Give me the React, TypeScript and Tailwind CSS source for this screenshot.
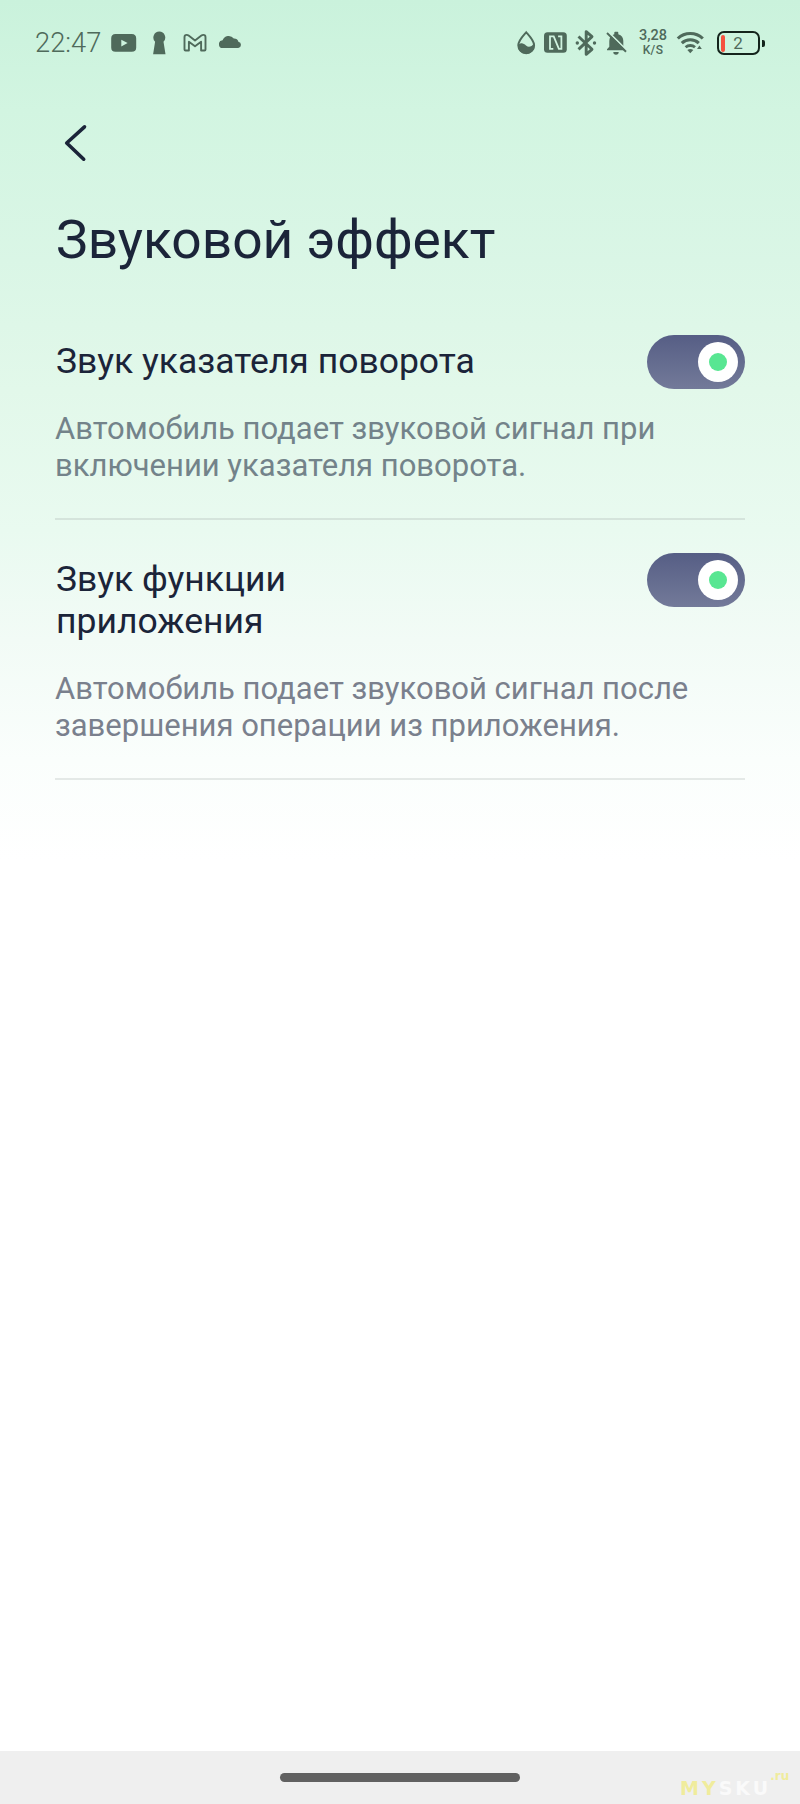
import React, { useState } from "react";

function LeftIcons() {
  return (
    <>
      <svg className="ml-[10px] shrink-0" width="26" height="28" viewBox="111 29 26 28" fill="#4f6a5b">
        <path
          fillRule="evenodd"
          d="M115.5 34h16.2q4.5 0 4.500 4.500v9q0 4.300-4.500 4.300h-16.200q-4.300 0-4.300-4.300v-9q0-4.500 4.300-4.500zM121.300 39.700v6.800l6.300-3.400z"
        />
      </svg>
      <svg className="ml-[16px] shrink-0" width="13" height="28" viewBox="153 29 13 28" fill="#4f6a5b">
        <path d="M159.300 31.600a6 6 0 0 1 4.200 10.200l2 12.400h-12.400l2-12.400a6 6 0 0 1 4.200-10.200z" />
      </svg>
      <svg className="ml-[17px] shrink-0" width="24" height="28" viewBox="183 29 24 28" fill="none" stroke="#4f6a5b" strokeWidth="1.900" strokeLinejoin="round">
        <path d="M184.500 49.500V37.200q0-2.300 2.200-2.300 1 0 1.900.7l6.400 4.900 6.400-4.900q.9-.7 1.900-.7 2.200 0 2.200 2.300v12.300q0 1-1 1h-3.400v-8.800l-6.100 4.600-6.100-4.600v8.800h-3.400q-1 0-1-1z" />
      </svg>
      <svg className="ml-[12px] shrink-0" width="23" height="28" viewBox="219 29 23 28" fill="#4f6a5b">
        <path d="M223 48.100a3.900 3.900 0 0 1-.4-7.800 6.400 6.400 0 0 1 11.200-1.800 4.600 4.600 0 0 1 4.600 3.300 3.200 3.200 0 0 1-.2 6.300z" />
      </svg>
    </>
  );
}

function RightIcons() {
  return (
    <>
      <svg className="shrink-0" width="19" height="28" viewBox="518 29 19 28">
        <path d="M527.200 32.300c-3 3.400-7.900 8.300-7.900 13a7.900 7.900 0 0 0 15.800 0c0-4.700-4.900-9.600-7.900-13z" fill="none" stroke="#4f6a5b" strokeWidth="2" />
        <path d="M519 45.300c3-3.300 5.500-2 8 .2 2.800 2.300 5.300 1.300 8.300-2.300 1.500 6-2.500 10.600-8.100 10.600-4.800 0-8.400-3.500-8.200-8.500z" fill="#4f6a5b" />
      </svg>
      <svg className="ml-[8px] shrink-0" width="23" height="28" viewBox="545 29 23 28">
        <rect x="545" y="32.300" width="22.800" height="20.400" rx="3.500" fill="#4f6a5b" />
        <path d="M554.300 48.800H551V36.300h3.700l5.200 12.500h2.500V36.300h-3.300" fill="none" stroke="#d0f3e0" strokeWidth="1.800" />
      </svg>
      <svg className="ml-[8px] shrink-0" width="22" height="28" viewBox="576 29 22 28">
        <path d="M579.500 36.500l13.500 12.800-5.800 5V31.600l5.800 5-13.500 12.800" fill="none" stroke="#4f6a5b" strokeWidth="2.900" strokeLinejoin="round" />
        <circle cx="578.300" cy="43" r="1.700" fill="#4f6a5b" />
        <circle cx="595.500" cy="43" r="1.700" fill="#4f6a5b" />
      </svg>
      <svg className="ml-[9px] shrink-0" width="22" height="28" viewBox="607 29 22 28">
        <path d="M608 50.300v-1l2.300-2.500V41a7 7 0 0 1 5-6.800v-1.500q0-.9.900-.9h2.200q.9 0 .9.900v1.500a7 7 0 0 1 5 6.800v5.800l2.300 2.500v1z" fill="#4f6a5b" />
        <path d="M614.300 52h5.400a2.700 2.700 0 0 1-5.400 0z" fill="#4f6a5b" />
        <path d="M609.200 31.900l19.300 19" stroke="#d0f3e0" strokeWidth="1.800" />
        <path d="M608 33l19 18.800" stroke="#4f6a5b" strokeWidth="1.900" />
      </svg>
      <div className="ml-[9px] flex w-[32px] shrink-0 flex-col items-center font-medium">
        <span className="text-[14.500px] leading-[14px]">3,28</span>
        <span className="text-[12px] leading-[14px] tracking-[0.400px]">K/S</span>
      </div>
      <svg className="ml-[7px] shrink-0" width="29" height="28" viewBox="677 29 29 28" fill="none" stroke="#4f6a5b">
        <path d="M678.800 38.500a18 18 0 0 1 25 0" strokeWidth="3.100" />
        <path d="M682.800 43.100a12.500 12.500 0 0 1 17 0" strokeWidth="3.100" />
        <path d="M686.600 47.300a7 7 0 0 1 9.400 0" strokeWidth="2.800" />
        <path d="M688.300 50q3-2 6 0l-3 3.300z" fill="#4f6a5b" stroke="none" />
        <path d="M698 49l2.400-3.500 2.400 3.500z" fill="#4f6a5b" stroke="none" />
      </svg>
      <div className="ml-[12px] flex h-[24px] w-[43px] shrink-0 items-center rounded-[7px] border-2 border-[#14241c] pl-[2px]">
        <div className="h-[17px] w-[4px] rounded-[2px] bg-[#f5513f]" />
        <span className="flex-1 pr-[7px] text-center text-[17px] leading-[20px]">2</span>
      </div>
      <div className="ml-[2px] h-[7px] w-[3px] shrink-0 rounded-r-[2px] bg-[#14241c]" />
    </>
  );
}

function Toggle({ label }: { label: string }) {
  const [on, setOn] = useState(true);
  return (
    <button
      role="switch"
      aria-checked={on}
      aria-label={label}
      onClick={() => setOn(!on)}
      className={`-mb-[7px] flex h-[54px] w-[98px] shrink-0 items-center rounded-full bg-linear-to-b from-[#565e85] to-[#737a99] px-[7px] ${on ? "justify-end" : "justify-start"}`}
    >
      <span className="flex size-[40px] items-center justify-center rounded-full bg-white">
        <span className="size-[18px] rounded-full bg-[#58e692]" />
      </span>
    </button>
  );
}

function Setting({ title, lines, descriptionColor, border }: { title: string; lines: string[]; descriptionColor: string; border: string }) {
  return (
    <section className={`border-b-2 pb-[34px] ${border}`}>
      <div className="flex items-start justify-between">
        <h2 className="pt-[5px] pl-px text-[35.500px] leading-[42px] whitespace-pre-line text-[#1b2439]">{title}</h2>
        <Toggle label={title} />
      </div>
      <p className={`mt-[29px] text-[31px] leading-[36.500px] whitespace-nowrap ${descriptionColor}`}>
        {lines.map((line) => (
          <span key={line} className="block">
            {line}
          </span>
        ))}
      </p>
    </section>
  );
}

export default function App() {
  return (
    <div className="relative flex h-[1804px] w-[800px] flex-col overflow-hidden bg-white bg-[linear-gradient(to_bottom,#caf2dc_0px,#d2f5e1_110px,#daf6e6_260px,#e2f8ea_390px,#e9faf0_530px,#f2fbf6_640px,#fafefc_760px,#ffffff_860px)] font-[Roboto,sans-serif]">
      <header className="flex h-[86px] items-center pr-[35px] pl-[35px] text-[#4f6a5b]">
        <span className="w-[66px] text-[27.300px] leading-[28px] font-light whitespace-nowrap">22:47</span>
        <LeftIcons />
        <div className="flex-1" />
        <RightIcons />
      </header>

      <main className="flex flex-1 flex-col px-[55px]">
        <button aria-label="Назад" className="mt-[37px] ml-[8px] h-[40px] w-[26px]">
          <svg width="26" height="40" viewBox="63 123 26 40" fill="none" stroke="#1b2439" strokeWidth="3.600" strokeLinecap="round" strokeLinejoin="round">
            <path d="M84.500 126.800L66.700 143l17 16.200" />
          </svg>
        </button>
        <h1 className="mt-[45px] pl-px text-[53.300px] leading-[64px] text-[#1b2439]">Звуковой эффект</h1>

        <div className="mt-[63px] flex flex-col gap-[33px]">
          <Setting
            title="Звук указателя поворота"
            lines={["Автомобиль подает звуковой сигнал при", "включении указателя поворота."]}
            descriptionColor="text-[#73838a]"
            border="border-[#d5e4dc]"
          />
          <Setting
            title={"Звук функции\nприложения"}
            lines={["Автомобиль подает звуковой сигнал после", "завершения операции из приложения."]}
            descriptionColor="text-[#7a808d]"
            border="border-[#e4e9e7]"
          />
        </div>
      </main>

      <footer className="flex h-[53px] justify-center bg-[#efefef] pt-[22px]">
        <div className="h-[9px] w-[240px] rounded-full bg-[#616161]" />
      </footer>

      <div className="absolute bottom-[6px] left-[680px] flex items-end font-['DejaVu_Sans'] text-[19px] leading-[19px] font-bold">
        <span className="tracking-[3px] text-[#f0ec9c]">MY</span>
        <span className="tracking-[3px] text-[#fafafa]">SKU</span>
        <span className="mb-[16px] -ml-[1px] text-[12px] leading-[11px] text-[#f0ec9c]">.ru</span>
      </div>
    </div>
  );
}
